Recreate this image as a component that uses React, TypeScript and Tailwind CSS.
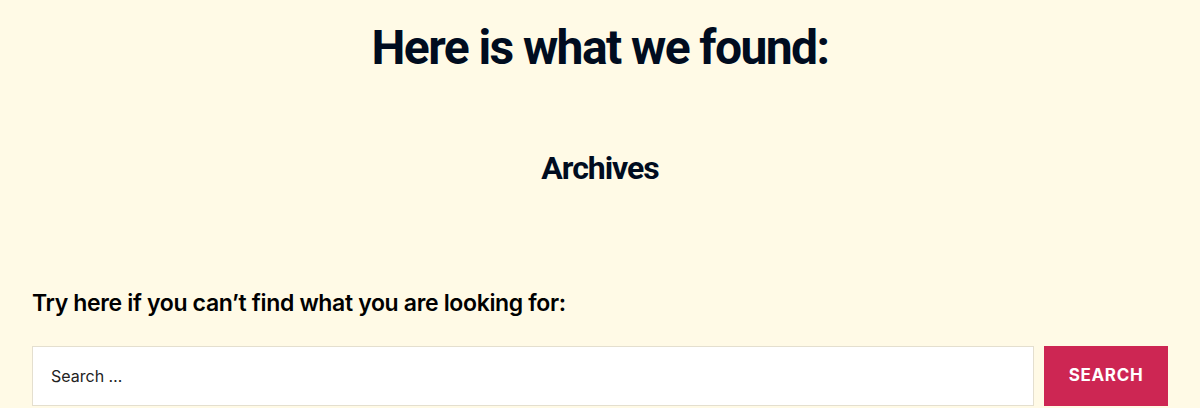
export default function App() {
  return (
    <div
      className="min-h-[408px] bg-[#fffae6] text-[#000c1f] overflow-hidden"
      style={{ fontFamily: 'Inter, "Noto Sans", sans-serif' }}
    >
      <h1
        className="pt-[18px] text-center text-[48px] font-bold leading-[1.25] tracking-[-0.033em]"
        style={{ fontFamily: 'Roboto, "Liberation Sans", sans-serif' }}
      >
        Here is what we found:
      </h1>
      <h2
        className="mt-[70px] text-center text-[32px] font-bold leading-[1.25] tracking-[-0.033em]"
        style={{ fontFamily: 'Roboto, "Liberation Sans", sans-serif' }}
      >
        Archives
      </h2>
      <div className="mt-[101px] px-8">
        <p className="text-[23px] font-semibold leading-[1.25] tracking-[-0.015em] text-black">
          Try here if you can’t find what you are looking for:
        </p>
        <form className="mt-[28px] flex gap-[10px]" onSubmit={e => e.preventDefault()}>
          <input
            className="h-[60px] flex-1 border border-[#e4dfcf] bg-white px-[18px] text-[16px] text-black placeholder:text-[#222] outline-none"
            placeholder="Search …"
          />
          <button
            type="submit"
            className="h-[60px] w-[124px] bg-[#cd2653] text-[17px] font-bold uppercase tracking-[0.04em] text-white"
          >
            Search
          </button>
        </form>
      </div>
    </div>
  )
}
